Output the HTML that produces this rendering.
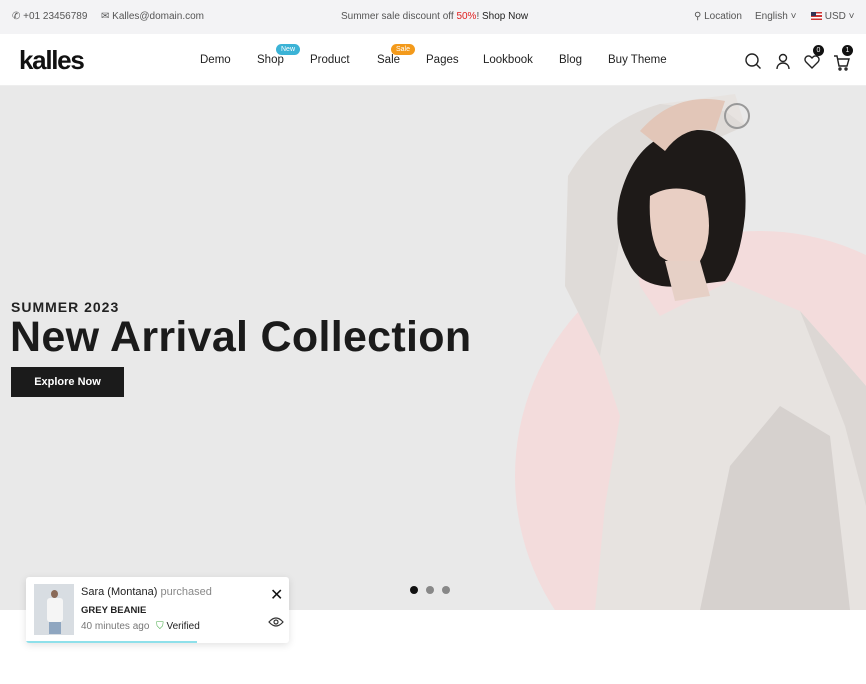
<!DOCTYPE html>
<html><head><meta charset="utf-8"><style>
*{margin:0;padding:0;box-sizing:border-box}
html,body{width:866px;height:684px;overflow:hidden}
body{font-family:"Liberation Sans",sans-serif;background:#fff;position:relative;color:#222}
.top{height:34px;background:#f3f3f5;font-size:10px;color:#555;position:relative}
.top span{position:absolute;top:11px}
.nav{height:52px;position:relative;border-bottom:1px solid #eee}
.nav .m{position:absolute;top:20px;font-size:11.5px;color:#222}
.badge{position:absolute;font-size:7px;color:#fff;border-radius:8px;padding:2px 5px}
.hero{position:absolute;top:86px;left:0;width:866px;height:524px;background:#e9e9e9;overflow:hidden}
</style></head><body>
<div class="top">
<span style="left:12px">✆ +01 23456789</span>
<span style="left:101px">✉ Kalles@domain.com</span>
<span style="left:341px">Summer sale discount off <b style="color:#e02020;font-weight:normal">50%</b>! <b style="color:#222;font-weight:normal">Shop Now</b></span>
<span style="left:694px">⚲ Location</span>
<span style="left:755px">English ˅</span>
<span style="left:811px"><i style="display:inline-block;width:11px;height:8px;background:linear-gradient(#c33 0 20%,#fff 20% 40%,#c33 40% 60%,#fff 60% 80%,#c33 80%);vertical-align:-1px;position:relative"><i style="position:absolute;left:0;top:0;width:5px;height:4px;background:#335"></i></i> USD ˅</span>
</div>
<div class="nav">
<div style="position:absolute;left:19px;top:11px;font-size:26px;font-weight:bold;letter-spacing:-1.3px;color:#111">kalles</div>
<span class="m" style="left:200px">Demo</span>
<span class="m" style="left:257px">Shop</span><span class="badge" style="left:276px;top:10px;background:#3bb3d6">New</span>
<span class="m" style="left:310px">Product</span>
<span class="m" style="left:377px">Sale</span><span class="badge" style="left:391px;top:10px;background:#f39a1b">Sale</span>
<span class="m" style="left:426px">Pages</span>
<span class="m" style="left:483px">Lookbook</span>
<span class="m" style="left:559px">Blog</span>
<span class="m" style="left:608px">Buy Theme</span>
<svg style="position:absolute;left:744px;top:18px" width="110" height="20" fill="none" stroke="#222" stroke-width="1.4">
<circle cx="8" cy="8" r="6"/><path d="M12.5 12.5l4 4"/>
<circle cx="39" cy="6" r="3.5"/><path d="M33 17c0-4 3-6 6-6s6 2 6 6"/>
<path d="M68 16l-6-6a3.5 3.5 0 015-5l1 1 1-1a3.5 3.5 0 015 5z"/>
<path d="M90 4h3l2 10h8l2-7h-11"/><circle cx="96" cy="17" r="1"/><circle cx="102" cy="17" r="1"/>
</svg>
<span style="position:absolute;left:813px;top:11px;width:11px;height:11px;border-radius:50%;background:#111;color:#fff;font-size:7px;text-align:center;line-height:11px">0</span>
<span style="position:absolute;left:842px;top:11px;width:11px;height:11px;border-radius:50%;background:#111;color:#fff;font-size:7px;text-align:center;line-height:11px">1</span>
</div>
<div class="hero">
<div style="position:absolute;left:515px;top:145px;width:490px;height:490px;border-radius:50%;background:#f3dcdc"></div>
<svg style="position:absolute;left:500px;top:0" width="366" height="524">
<path d="M65 200 L68 90 Q100 35 160 18 L235 8 L245 40 L200 60 L150 85 L125 120 L140 200 L160 230 L230 195 L300 225 L340 270 L366 300 L366 524 L95 524 L105 420 L120 330 L100 270 Z" fill="#e7e3e0"/>
<path d="M125 120 L150 85 L200 60 L245 40 L225 25 L160 18 Q100 35 68 90 L65 200 L100 270 Z" fill="#dfdbd8"/>
<path d="M200 524 L230 380 L280 320 L330 350 L350 524 Z" fill="#d6d1ce"/>
<path d="M300 225 L340 270 L366 300 L366 420 L345 340 Z" fill="#dcd7d4"/>
<path d="M120 110 Q140 35 210 45 Q250 60 245 130 Q240 175 225 195 L185 200 Q140 205 128 175 Q112 145 120 110Z" fill="#1e1a18"/>
<path d="M150 110 Q175 95 205 110 Q215 150 200 175 Q180 185 160 170 Q148 150 150 110Z" fill="#e9cfc4"/>
<path d="M165 175 L200 175 L210 210 L175 215Z" fill="#e6d0c6"/>
<path d="M140 45 Q175 5 225 15 L215 45 Q185 38 165 65Z" fill="#e2c6b8"/>
<circle cx="237" cy="30" r="12" stroke="#999" stroke-width="2" fill="none"/>
</svg>
<div style="position:absolute;left:11px;top:213px;font-size:14px;font-weight:bold;letter-spacing:1px;color:#222">SUMMER 2023</div>
<div style="position:absolute;left:10px;top:227px;font-size:43px;font-weight:bold;color:#1b1b1b;letter-spacing:0.3px">New Arrival Collection</div>
<div style="position:absolute;left:11px;top:281px;width:113px;height:30px;background:#1b1b1b;color:#fff;font-size:11px;font-weight:bold;text-align:center;line-height:30px">Explore Now</div>
<span style="position:absolute;left:410px;top:500px;width:8px;height:8px;border-radius:50%;background:#111"></span>
<span style="position:absolute;left:426px;top:500px;width:8px;height:8px;border-radius:50%;background:#888"></span>
<span style="position:absolute;left:442px;top:500px;width:8px;height:8px;border-radius:50%;background:#888"></span>
</div>
<div style="position:absolute;left:26px;top:577px;width:263px;height:66px;background:#fff;border-radius:3px;box-shadow:0 2px 8px rgba(0,0,0,.12);overflow:hidden">
<div style="position:absolute;left:8px;top:7px;width:40px;height:51px;background:#d8dde2"><div style="position:absolute;left:13px;top:14px;width:16px;height:24px;background:#f5f5f5;border-radius:3px"></div><div style="position:absolute;left:17px;top:6px;width:7px;height:8px;background:#8a6a58;border-radius:50%"></div><div style="position:absolute;left:15px;top:38px;width:12px;height:12px;background:#8fa6c0"></div></div>
<div style="position:absolute;left:55px;top:9px;font-size:11px;color:#222">Sara (Montana) <span style="color:#888">purchased</span></div>
<div style="position:absolute;left:55px;top:28px;font-size:9.5px;font-weight:bold;color:#222">GREY BEANIE</div>
<div style="position:absolute;left:55px;top:44px;font-size:10px;color:#777">40 minutes ago <span style="color:#4a4;margin-left:4px">⛉</span> <span style="color:#222">Verified</span></div>
<div style="position:absolute;left:244px;top:8px;font-size:16px;color:#111">✕</div>
<svg style="position:absolute;left:242px;top:39px" width="16" height="12" fill="none" stroke="#333" stroke-width="1.2"><path d="M1 6Q8-2 15 6Q8 14 1 6Z"/><circle cx="8" cy="6" r="2"/></svg>
<div style="position:absolute;left:0;bottom:0;width:171px;height:2px;background:#8ee0ea"></div>
</div>
</body></html>
